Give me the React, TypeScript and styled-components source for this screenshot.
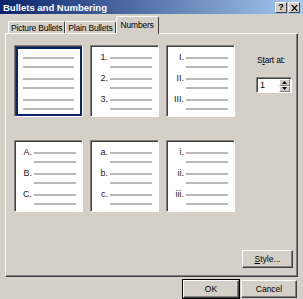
import React from 'react';
import styled, { createGlobalStyle } from 'styled-components';

const Face = '#d4d0c8';
const Shadow = '#808080';
const DarkShadow = '#404040';
const Highlight = '#ffffff';

const GlobalStyle = createGlobalStyle`
	html, body {
		margin: 0;
		padding: 0;
		background: ${Face};
	}
	body {
		font-family: 'Liberation Sans', Arial, sans-serif;
		font-size: 8px;
		color: #000;
	}
`;

type Kind = 'plain' | 'arabic' | 'roman' | 'upper' | 'lower' | 'smallRoman';

const styles: { kind: Kind; labels: string[] }[] = [
	{ kind: 'plain', labels: ['', '', ''] },
	{ kind: 'arabic', labels: ['1.', '2.', '3.'] },
	{ kind: 'roman', labels: ['I.', 'II.', 'III.'] },
	{ kind: 'upper', labels: ['A.', 'B.', 'C.'] },
	{ kind: 'lower', labels: ['a.', 'b.', 'c.'] },
	{ kind: 'smallRoman', labels: ['i.', 'ii.', 'iii.'] },
];

const tabs = ['Picture Bullets', 'Plain Bullets', 'Numbers'];

const App: React.FC = () => {
	return (
		<>
			<GlobalStyle />
			<Window>
				<TitleBar>
					<Title>Bullets and Numbering</Title>
					<Caps>
						<CapButton>?</CapButton>
						<CapButton>
							<svg width='7' height='6' viewBox='0 0 8 7'>
								<path d='M0 0h2l2 2.5L6 0h2L5 3.5 8 7H6L4 4.5 2 7H0l3-3.5z' fill='#000' />
							</svg>
						</CapButton>
					</Caps>
				</TitleBar>
				<Body>
					<TabStrip>
						{tabs.map((t) => (
							<Tab key={t} active={t === 'Numbers'}>
								{t}
							</Tab>
						))}
					</TabStrip>
					<Panel>
						<Gallery>
							{styles.map((s, i) => (
								<Preview key={s.kind}>
									<PreviewInner selected={i === 0} plain={s.kind === 'plain'}>
										{s.labels.map((l, j) => (
											<Group key={j}>
												<Row>
													{s.kind !== 'plain' && <Label>{l}</Label>}
													<Line />
												</Row>
												<Row>
													{s.kind !== 'plain' && <Label />}
													<Line />
												</Row>
											</Group>
										))}
									</PreviewInner>
								</Preview>
							))}
						</Gallery>
						<Side>
							<StartLabel>
								S<u>t</u>art at:
							</StartLabel>
							<Spinner>
								<SpinValue>1</SpinValue>
								<SpinButtons>
									<SpinButton>
										<svg width='5' height='3' viewBox='0 0 5 3'>
											<path d='M2.5 0L5 3H0z' fill='#000' />
										</svg>
									</SpinButton>
									<SpinButton>
										<svg width='5' height='3' viewBox='0 0 5 3'>
											<path d='M0 0h5L2.5 3z' fill='#000' />
										</svg>
									</SpinButton>
								</SpinButtons>
							</Spinner>
							<StyleButton>
								<u>S</u>tyle...
							</StyleButton>
						</Side>
					</Panel>
					<Footer>
						<Button isDefault>OK</Button>
						<Button>Cancel</Button>
					</Footer>
				</Body>
			</Window>
		</>
	);
};

interface selectable {
	selected: boolean;
	plain: boolean;
}

const Window = styled.div`
	width: 303px;
	height: 299px;
	display: flex;
	flex-direction: column;
	background: ${Face};
	overflow: hidden;
`;

const TitleBar = styled.div`
	height: 14px;
	display: flex;
	align-items: center;
	justify-content: space-between;
	padding: 0 3px 0 3px;
	background: linear-gradient(to right, #0a246a, #a6caf0);
`;

const Title = styled.span`
	color: #fff;
	font-weight: bold;
	font-size: 9.5px;
	white-space: nowrap;
`;

const Caps = styled.div`
	display: flex;
	gap: 1px;
	padding-top: 1px;
`;

const CapButton = styled.div`
	width: 10px;
	height: 9px;
	display: flex;
	align-items: center;
	justify-content: center;
	background: ${Face};
	font-weight: bold;
	font-size: 9px;
	line-height: 9px;
	border-top: 1px solid ${Highlight};
	border-left: 1px solid ${Highlight};
	border-right: 1px solid ${DarkShadow};
	border-bottom: 1px solid ${DarkShadow};
`;

const Body = styled.div`
	flex: 1;
	display: flex;
	flex-direction: column;
	padding: 5px 5px 0 5px;
`;

const TabStrip = styled.div`
	display: flex;
	align-items: flex-end;
	height: 14px;
	padding-left: 3px;
	position: relative;
	z-index: 1;
`;

const Tab = styled.div<{ active: boolean }>`
	height: ${({ active }) => (active ? '15px' : '11px')};
	margin-bottom: ${({ active }) => (active ? '-1px' : '0')};
	padding: 0 ${({ active }) => (active ? '4px' : '2px')} ${({ active }) => (active ? '2px' : '0')};
	display: flex;
	align-items: center;
	background: ${Face};
	border-top: 1px solid ${Highlight};
	border-left: 1px solid ${Highlight};
	border-right: 1px solid ${DarkShadow};
	border-radius: 2px 2px 0 0;
	white-space: nowrap;
	font-size: 8.5px;
	letter-spacing: -0.2px;
`;

const Panel = styled.div`
	height: 244px;
	box-sizing: border-box;
	display: flex;
	border-top: 1px solid ${Highlight};
	border-left: 1px solid ${Highlight};
	border-right: 1px solid ${DarkShadow};
	border-bottom: 1px solid ${DarkShadow};
	box-shadow: inset -1px -1px 0 ${Shadow};
`;

const Gallery = styled.div`
	display: grid;
	grid-template-columns: repeat(3, 69px);
	grid-auto-rows: 72px;
	column-gap: 7px;
	row-gap: 23px;
	padding: 11px 0 0 8px;
	align-content: start;
`;

const Preview = styled.div`
	box-sizing: border-box;
	border-top: 1px solid ${Shadow};
	border-left: 1px solid ${Shadow};
	border-right: 1px solid ${Highlight};
	border-bottom: 1px solid ${Highlight};
	box-shadow: inset 1px 1px 0 ${DarkShadow};
	background: #fff;
	padding: 1px 0 0 1px;
`;

const PreviewInner = styled.div<selectable>`
	box-sizing: border-box;
	height: 100%;
	border: 2px solid ${({ selected }) => (selected ? '#0a246a' : '#fff')};
	display: flex;
	flex-direction: column;
	gap: 5px;
	padding: 5px ${({ plain }) => (plain ? '6px' : '4px')} 0 ${({ plain }) => (plain ? '5px' : '4px')};
`;

const Group = styled.div`
	display: flex;
	flex-direction: column;
	gap: 2px;
`;

const Row = styled.div`
	display: flex;
	align-items: center;
	height: 7px;
`;

const Label = styled.span`
	width: 10px;
	flex-shrink: 0;
	text-align: right;
	padding-right: 2px;
	font-size: 9px;
	line-height: 7px;
	color: #222;
`;

const Line = styled.div`
	flex: 1;
	height: 2px;
	background: #b8b8b8;
`;

const Side = styled.div`
	flex: 1;
	display: flex;
	flex-direction: column;
	align-items: flex-start;
	padding: 21px 4px 8px 21px;
`;

const StartLabel = styled.div`
	font-size: 8.5px;
	letter-spacing: -0.2px;
	margin-left: 1px;
`;

const Spinner = styled.div`
	margin-top: 12px;
	width: 36px;
	height: 16px;
	box-sizing: border-box;
	display: flex;
	background: #fff;
	border-top: 1px solid ${Shadow};
	border-left: 1px solid ${Shadow};
	border-right: 1px solid ${Highlight};
	border-bottom: 1px solid ${Highlight};
	box-shadow: inset 1px 1px 0 ${DarkShadow};
`;

const SpinValue = styled.div`
	flex: 1;
	padding: 1px 0 0 3px;
	font-size: 9px;
	line-height: 12px;
`;

const SpinButtons = styled.div`
	width: 11px;
	display: flex;
	flex-direction: column;
	padding: 1px 1px 0 0;
`;

const SpinButton = styled.div`
	flex: 1;
	display: flex;
	align-items: center;
	justify-content: center;
	background: ${Face};
	border-top: 1px solid ${Highlight};
	border-left: 1px solid ${Highlight};
	border-right: 1px solid ${Shadow};
	border-bottom: 1px solid ${Shadow};
`;

const Button = styled.div<{ isDefault?: boolean }>`
	width: 56px;
	height: 18px;
	box-sizing: border-box;
	display: flex;
	align-items: center;
	justify-content: center;
	background: ${Face};
	font-size: 8.5px;
	border-top: 1px solid ${Highlight};
	border-left: 1px solid ${Highlight};
	border-right: 1px solid ${DarkShadow};
	border-bottom: 1px solid ${DarkShadow};
	box-shadow: inset -1px -1px 0 ${Shadow};
	${({ isDefault }) =>
		isDefault
			? `
                outline: 1px solid #000;
                outline-offset: 0;`
			: ''}
`;

const StyleButton = styled(Button)`
	margin-top: auto;
	margin-left: -14px;
	width: 51px;
`;

const Footer = styled.div`
	display: flex;
	justify-content: flex-end;
	gap: 2px;
	padding: 3px 1px 0 0;
`;

export default App;
